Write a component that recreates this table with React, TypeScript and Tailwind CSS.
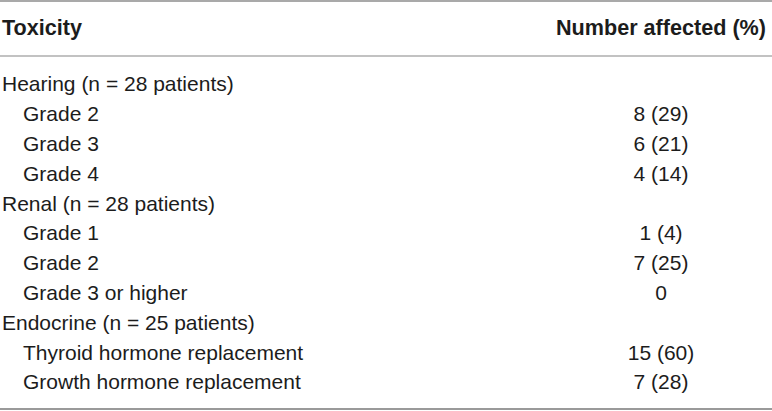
import React from "react";

type Row = { label: string; value?: string; indent?: boolean };

const rows: Row[] = [
  { label: "Hearing (n = 28 patients)" },
  { label: "Grade 2", value: "8 (29)", indent: true },
  { label: "Grade 3", value: "6 (21)", indent: true },
  { label: "Grade 4", value: "4 (14)", indent: true },
  { label: "Renal (n = 28 patients)" },
  { label: "Grade 1", value: "1 (4)", indent: true },
  { label: "Grade 2", value: "7 (25)", indent: true },
  { label: "Grade 3 or higher", value: "0", indent: true },
  { label: "Endocrine (n = 25 patients)" },
  { label: "Thyroid hormone replacement", value: "15 (60)", indent: true },
  { label: "Growth hormone replacement", value: "7 (28)", indent: true },
];

export default function App() {
  return (
    <div
      className="w-[772px] h-[411px] bg-white text-[#1c1c1c] text-[21px]"
      style={{ fontFamily: '"Liberation Sans", Arial, sans-serif' }}
    >
      <div className="border-t-2 border-[#a9a9a9]">
        <div className="h-[53px] flex items-center justify-between font-bold text-[21.6px] pl-[2px] pr-[6px]">
          <span>Toxicity</span>
          <span>Number affected (%)</span>
        </div>
        <div className="border-t-2 border-[#c2c2c2] pt-[12px] pb-[11px] border-b-2 border-b-[#9a9a9a]">
          {rows.map((r, i) => (
            <div key={i} className="h-[29.8px] flex items-center justify-between pl-[2px] pr-[6px] leading-none">
              <span className={r.indent ? "pl-[21px]" : ""}>{r.label}</span>
              <span className="w-[210px] text-center">{r.value ?? ""}</span>
            </div>
          ))}
        </div>
      </div>
    </div>
  );
}
